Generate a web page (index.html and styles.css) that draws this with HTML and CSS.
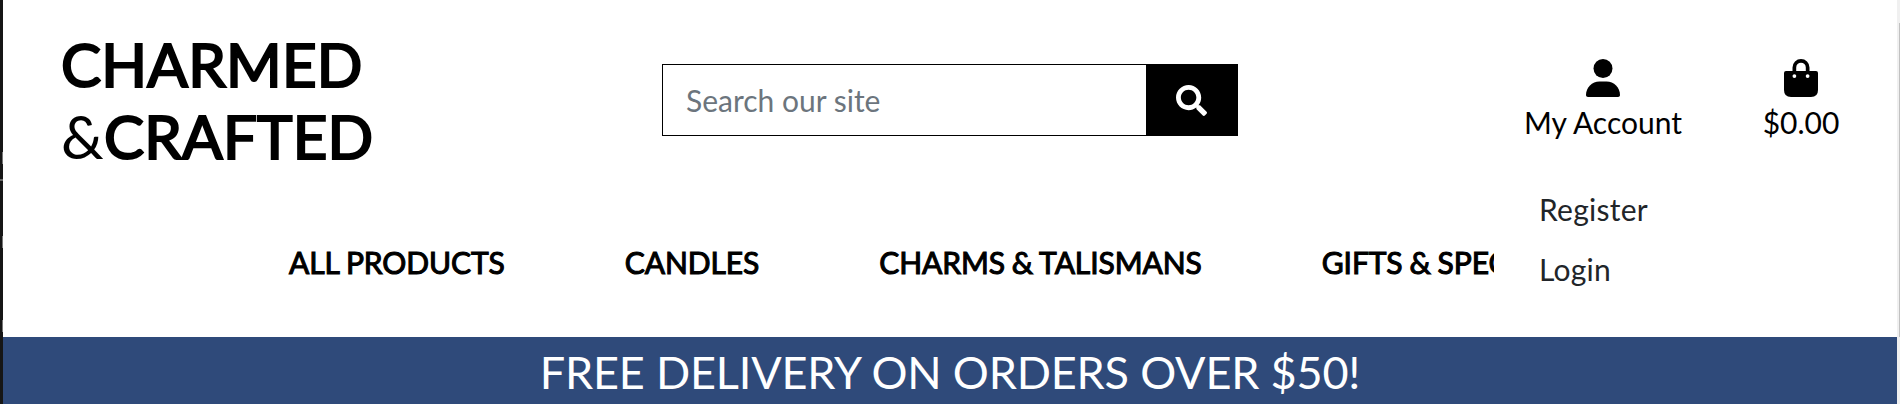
FILE: index.html
```html
<!DOCTYPE html>
<html lang="en">
<head>
<meta charset="utf-8">
<title>Charmed &amp; Crafted</title>
<link rel="stylesheet" href="styles.css">
</head>
<body>
<div class="window">
  <div class="edge-left"><i class="tick"></i><i class="dash"></i><i class="tick"></i><i class="tick"></i></div>
  <div class="page">
    <header class="header">
      <div class="top">
        <a class="logo"><span class="logo-line"><b class="logo-word">CHARMED</b></span><span class="logo-line">&amp;<b class="logo-word">CRAFTED</b></span></a>
        <form class="search">
          <input class="search-input" type="text" placeholder="Search our site">
          <button class="search-button" type="button" aria-label="Search">
            <svg class="search-icon" viewBox="0 0 512 512"><path fill="currentColor" d="M505 442.700 405.300 343c-4.500-4.500-10.600-7-17-7H372c27.600-35.300 44-79.700 44-128C416 93.100 322.900 0 208 0S0 93.100 0 208s93.100 208 208 208c48.300 0 92.700-16.400 128-44v16.300c0 6.400 2.500 12.500 7 17l99.700 99.700c9.400 9.400 24.600 9.400 33.900 0l28.300-28.300c9.400-9.400 9.400-24.600.1-34zM208 336c-70.700 0-128-57.200-128-128 0-70.700 57.200-128 128-128 70.700 0 128 57.200 128 128 0 70.700-57.200 128-128 128z"/></svg>
          </button>
        </form>
        <div class="tools">
          <div class="tool account">
            <svg class="tool-icon" viewBox="0 0 34 38"><circle cx="17" cy="9.500" r="9.500"/><path d="M13.500 22.500h7C28 22.500 34 28.500 34 36c0 1.300-.8 2-2 2H2c-1.200 0-2-.7-2-2 0-7.500 6-13.500 13.500-13.500z"/></svg>
            <span class="account-label">My Account</span>
            <div class="menu"><a>Register</a><a>Login</a></div>
          </div>
          <div class="tool bag">
            <svg class="tool-icon" viewBox="0 0 34 38"><path fill-rule="evenodd" d="M8.500 12V8.500a8.500 8.500 0 0 1 17 0V12H32q2 0 2 2v17q0 7-7 7H7q-7 0-7-7V14q0-2 2-2zM12.200 12h9.600V8.500a4.800 4.800 0 0 0-9.600 0zM10.400 15.200a1.900 1.900 0 1 0 0 3.800 1.900 1.900 0 0 0 0-3.800zM23.600 15.200a1.900 1.900 0 1 0 0 3.800 1.900 1.900 0 0 0 0-3.800z"/></svg>
            <span class="bag-label">$0.00</span>
          </div>
        </div>
      </div>
      <nav class="nav"><a>ALL PRODUCTS</a><a>CANDLES</a><a>CHARMS &amp; TALISMANS</a><a>GIFTS &amp; SPEC</a></nav>
    </header>
    <div class="banner">FREE DELIVERY ON ORDERS OVER $50!</div>
  </div>
  <div class="scrollbar"><i class="thumb"></i></div>
</div>
</body>
</html>
```
FILE: styles.css
```css
* { box-sizing: border-box; }
body { margin: 0; background: #fff; color: #000; font: 30px/45px Lato, sans-serif; overflow: hidden; }
.window { display: flex; height: 404px; }
.edge-left { width: 3px; background: #161616; display: flex; flex-direction: column; padding-top: 152px; align-items: flex-end; }
.tick { width: 1px; height: 12px; margin-bottom: 72px; background: #777; }
.tick:first-child { margin-bottom: 15px; }
.dash { width: 3px; height: 2px; margin-bottom: 55px; background: #666; }
.page { width: 1894px; display: flex; flex-direction: column; }
.header { height: 337px; display: flex; flex-direction: column; }
.top { height: 200px; display: flex; align-items: flex-start; }
.logo { width: 659px; flex: none; padding: 28px 0 0 58px; font-size: 60px; line-height: 72px; letter-spacing: .22px; }
.logo-line { display: block; white-space: nowrap; }
.logo-word { font-weight: 400; -webkit-text-stroke: 2.2px #000; }
.search { display: flex; flex: none; width: 576px; height: 72px; margin-top: 64px; }
.search-input { width: 484px; height: 72px; border: 1px solid #000; border-right: 0; border-radius: 0; padding: 0 0 0 23px; background: #fff; font: 30px Lato, sans-serif; outline: 0; }
.search-input::placeholder { color: #6c757d; opacity: 1; }
.search-button { width: 92px; height: 72px; border: 0; padding: 0 1px 0 0; background: #000; color: #fff; display: flex; align-items: center; justify-content: center; }
.search-icon { width: 31px; height: 31px; }
.tools { display: flex; flex: none; padding-top: 59px; margin-left: 265px; }
.tool { position: relative; display: flex; flex-direction: column; align-items: center; white-space: nowrap; }
.account { width: 200px; }
.bag { width: 196px; }
.tool-icon { width: 34px; height: 38px; margin-bottom: 3px; }
.menu { position: absolute; top: 112px; left: -9px; width: 380px; height: 160px; padding: 8px 0 0 45px; background: #fff; color: #212529; display: flex; flex-direction: column; line-height: 60px; letter-spacing: .25px; }
.nav { display: flex; gap: 120px; width: 1491px; padding: 40px 0 0 286px; white-space: nowrap; overflow: hidden; letter-spacing: -.08px; word-spacing: -.7px; -webkit-text-stroke: 1.1px #000; }
.banner { height: 67px; background: #2f4a7a; color: #fff; font-size: 45px; line-height: 70px; letter-spacing: -.18px; text-align: center; white-space: nowrap; }
.scrollbar { width: 3px; background: #f0f0f0; display: flex; justify-content: flex-end; }
.thumb { width: 1px; height: 314px; margin-top: 23px; background: #c1c1c1; }
```
